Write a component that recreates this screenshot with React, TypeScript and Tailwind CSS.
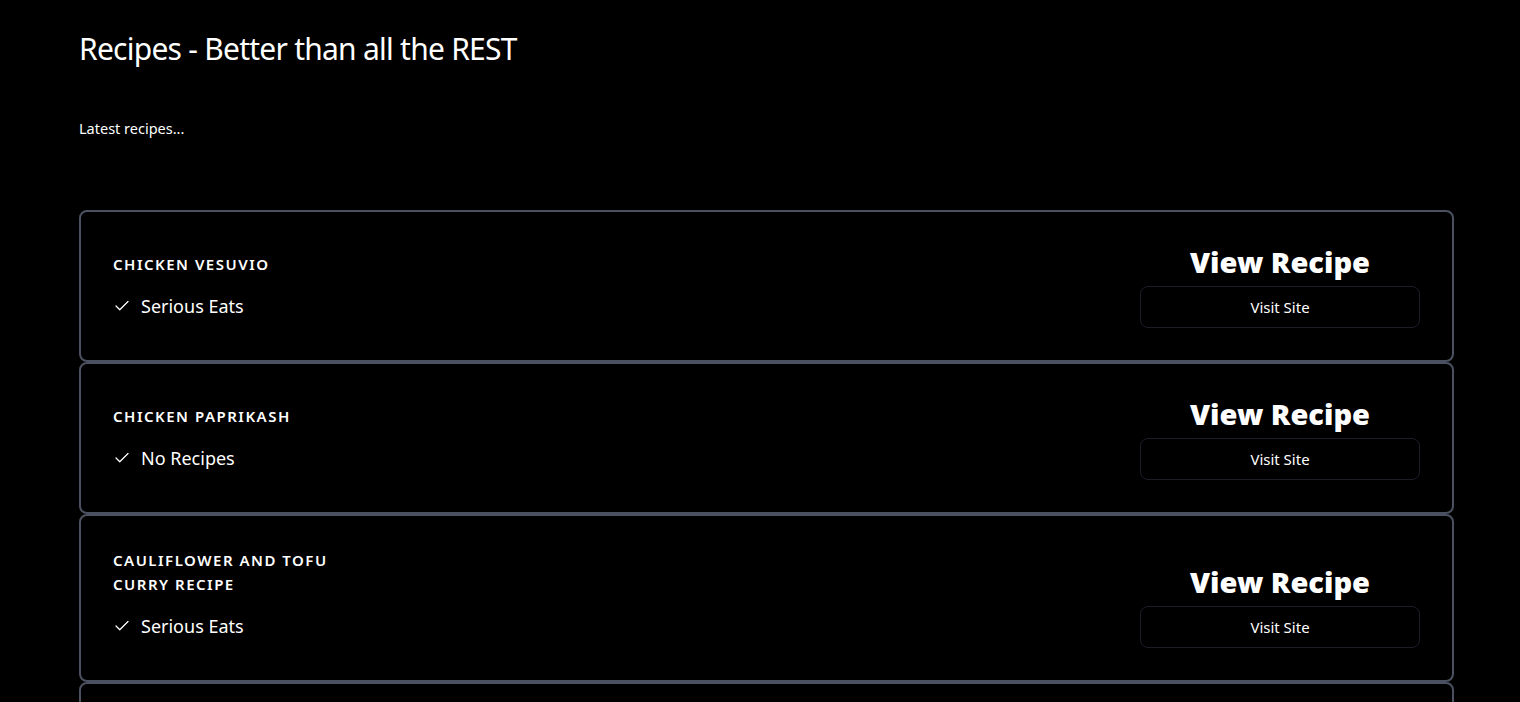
import React from 'react';
import { Check } from 'lucide-react';

interface Recipe {
  title: string;
  source: string;
}

const RECIPES: Recipe[] = [
  { title: 'Chicken Vesuvio', source: 'Serious Eats' },
  { title: 'Chicken Paprikash', source: 'No Recipes' },
  { title: 'Cauliflower and Tofu Curry Recipe', source: 'Serious Eats' },
  { title: 'Chicken Parmesan', source: 'Closet Cooking' },
];

const RecipeCard: React.FC<{ recipe: Recipe }> = ({ recipe }) => (
  <div className="flex items-end justify-between rounded-lg border-2 border-[#4b5160] bg-black p-8">
    <div className="w-[250px] pb-2">
      <h3 className="text-[15px] leading-6 font-semibold uppercase tracking-[0.1em] text-white mb-4">{recipe.title}</h3>
      <div className="flex items-center text-lg leading-7 text-white">
        <Check size={18} strokeWidth={1.75} className="mr-2.5 shrink-0" />
        <span>{recipe.source}</span>
      </div>
    </div>
    <div className="flex w-[280px] flex-col items-center">
      <h2 className="text-[29px] leading-9 font-black text-white">View Recipe</h2>
      <button className="mt-1.5 w-full rounded-lg border border-[#1c1f2a] bg-black py-2.5 text-[15px] leading-5 text-white">
        Visit Site
      </button>
    </div>
  </div>
);

const App: React.FC = () => {
  return (
    <div className="h-[702px] overflow-hidden bg-black text-white" style={{ fontFamily: '"Noto Sans", "Open Sans", sans-serif' }}>
      <div className="w-[1375px] ml-[79px]">
        <h1 className="pt-[31px] text-3xl leading-9 font-normal tracking-[-0.025em]">Recipes - Better than all the REST</h1>
        <p className="mt-[51px] text-[14.5px] leading-5">Latest recipes...</p>
        <div className="mt-[72px]">
          {RECIPES.map(r => (
            <RecipeCard key={r.title} recipe={r} />
          ))}
        </div>
      </div>
    </div>
  );
};

export default App;
